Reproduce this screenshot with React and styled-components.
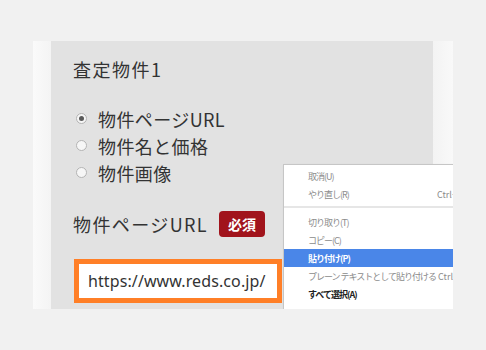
import styled, { createGlobalStyle } from 'styled-components';

const Global = createGlobalStyle`
    body {
        margin: 0;
        background: #f1f1f1;
        font-family: "Noto Sans CJK JP", "Noto Sans", sans-serif;
    }
`;

const Frame = styled.div`
    position: relative;
    overflow: hidden;
    margin: 41px 0 0 33px;
    width: 420px;
    height: 268px;
    display: flex;
    background: linear-gradient(90deg, #fafafa 0px, #f4f4f4 18px, #e2e2e2 18px, #e2e2e2 400px, #f3f3f3 400px, #f9f9f9 420px);
`;

const Sheet = styled.div`
    margin-left: 18px;
    width: 382px;
    padding: 15px 22px 0;
    box-sizing: border-box;
    background: #e2e2e2;
    color: #333;
`;

const Title = styled.div`
    font-size: 18px;
    line-height: 26px;
    letter-spacing: 1.5px;
`;

const RadioList = styled.div`
    margin-top: 23px;
    display: flex;
    flex-direction: column;
`;

const RadioRow = styled.div`
    display: flex;
    align-items: center;
    height: 27px;
    font-size: 18px;
    letter-spacing: 0.4px;
`;

const Radio = styled.span`
    width: 9px;
    height: 9px;
    margin: 0 11px 0 3px;
    border: 1px solid #b4b4b4;
    border-radius: 50%;
    background: #f6f6f6;
    display: flex;
    align-items: center;
    justify-content: center;
    &::after {
        content: "";
        width: 5px;
        height: 5px;
        border-radius: 50%;
        background: ${p => (p.$checked ? '#5a5a5a' : 'transparent')};
    }
`;

const FieldLabel = styled.div`
    margin-top: 25px;
    display: flex;
    align-items: center;
    height: 26px;
    font-size: 18px;
    letter-spacing: 1.4px;
`;

const Badge = styled.span`
    margin-left: 11px;
    padding: 0 9px;
    height: 26px;
    line-height: 26px;
    border-radius: 4px;
    background: #a1141c;
    color: #fff;
    font-size: 14px;
    font-weight: 700;
    letter-spacing: 0;
`;

const UrlBox = styled.div`
    margin: 22px 0 0 1px;
    width: 208px;
    height: 44px;
    box-sizing: border-box;
    border: 5px solid #ff7f27;
    background: #fff;
    padding-left: 9px;
    display: flex;
    align-items: center;
    font-family: "Noto Sans", sans-serif;
    font-size: 16px;
    letter-spacing: 0.1px;
    color: #333;
`;

const Menu = styled.div`
    position: absolute;
    left: 250px;
    top: 123px;
    width: 215px;
    height: 185px;
    box-sizing: border-box;
    padding-top: 2px;
    background: #fff;
    border: 1px solid #c6c6c6;
    box-shadow: 1px 1px 2px rgba(0, 0, 0, 0.12);
    font-size: 9px;
    letter-spacing: -1px;
`;

const MenuItem = styled.div`
    display: flex;
    align-items: center;
    height: 18px;
    padding-left: 24px;
    background: ${p => (p.$active ? '#4a86e8' : 'transparent')};
    color: ${p => (p.$active ? '#fff' : p.$strong ? '#222' : '#8c8c8c')};
    font-weight: ${p => (p.$active || p.$strong ? 700 : 400)};
`;

const ItemText = styled.span`
    flex-shrink: 0;
    min-width: 127px;
    padding-right: 2px;
    white-space: nowrap;
`;

const Shortcut = styled.span`
    flex-shrink: 0;
    letter-spacing: 0;
    white-space: nowrap;
`;

const Divider = styled.div`
    margin: 3px 0 5px;
    height: 2px;
    background: #e6e6e6;
`;

const options = [
    { label: '物件ページURL', checked: true },
    { label: '物件名と価格' },
    { label: '物件画像' },
];

export default function App() {
    return (
        <>
            <Global />
            <Frame>
                <Sheet>
                    <Title>査定物件1</Title>
                    <RadioList>
                        {options.map(o => (
                            <RadioRow key={o.label}>
                                <Radio $checked={o.checked} />
                                {o.label}
                            </RadioRow>
                        ))}
                    </RadioList>
                    <FieldLabel>
                        物件ページURL
                        <Badge>必須</Badge>
                    </FieldLabel>
                    <UrlBox>https://www.reds.co.jp/</UrlBox>
                </Sheet>
                <Menu>
                    <MenuItem><ItemText>取消(U)</ItemText></MenuItem>
                    <MenuItem><ItemText>やり直し(R)</ItemText><Shortcut>Ctrl+Shift+Z</Shortcut></MenuItem>
                    <Divider />
                    <MenuItem><ItemText>切り取り(T)</ItemText></MenuItem>
                    <MenuItem><ItemText>コピー(C)</ItemText></MenuItem>
                    <MenuItem $active><ItemText>貼り付け(P)</ItemText></MenuItem>
                    <MenuItem><ItemText>プレーン テキストとして貼り付ける</ItemText><Shortcut>Ctrl+Shift+V</Shortcut></MenuItem>
                    <MenuItem $strong><ItemText>すべて選択(A)</ItemText></MenuItem>
                </Menu>
            </Frame>
        </>
    );
}
